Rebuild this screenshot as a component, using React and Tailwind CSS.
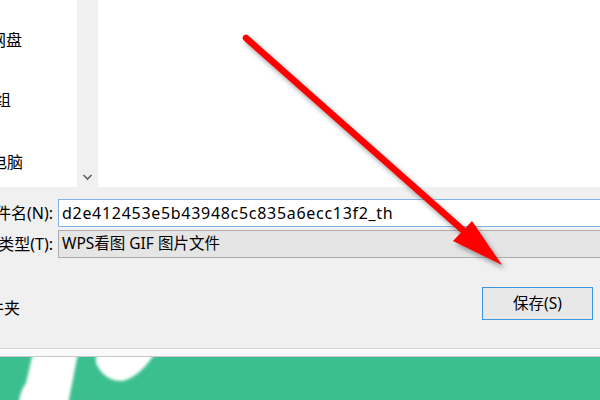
import React from "react";

const font = { fontFamily: '"Noto Sans", "Noto Sans CJK SC", sans-serif' };

function Arrow() {
  return (
    <svg className="absolute left-0 top-0" width="600" height="400" viewBox="0 0 600 400">
      <defs>
        <filter id="sh" x="-20%" y="-20%" width="140%" height="140%">
          <feGaussianBlur stdDeviation="2.5" />
        </filter>
      </defs>
      <g transform="translate(3 4)" filter="url(#sh)" opacity="0.55">
        <line x1="246" y1="38" x2="465" y2="232" stroke="#555" strokeWidth="7" strokeLinecap="round" />
        <polygon points="502,265 453,241 472,221" fill="#555" />
      </g>
      <line x1="246" y1="38" x2="465" y2="232" stroke="#ff0000" strokeWidth="6.5" strokeLinecap="round" />
      <polygon points="502,265 453,241 472,221" fill="#ff0000" />
    </svg>
  );
}

function GreenArt() {
  return (
    <svg className="absolute left-0 top-0" width="600" height="55" viewBox="0 0 600 55">
      <defs>
        <filter id="bl" x="-20%" y="-20%" width="140%" height="140%">
          <feGaussianBlur stdDeviation="1.6" />
        </filter>
      </defs>
      <g fill="#fff" filter="url(#bl)">
        <path d="M33 -4 L78 -4 L66 58 L20 58 Q16 40 26 26 Z" />
        <path d="M96 -4 L155 -4 Q140 20 122 24 Q104 24 96 6 Z" />
      </g>
    </svg>
  );
}

export default function App() {
  return (
    <div className="relative w-[600px] h-[400px] overflow-hidden bg-[#f0f0f0] text-[#000]" style={font}>
      <div className="flex h-[187px]">
        <div className="w-[77px] bg-white overflow-hidden text-[16px] leading-none">
          <div className="ml-[-10px] mt-[32px] whitespace-nowrap">网盘</div>
          <div className="ml-[-21px] mt-[44px] whitespace-nowrap">群组</div>
          <div className="ml-[-25px] mt-[46px] whitespace-nowrap">此电脑</div>
        </div>
        <div className="w-[21px] bg-[#f0f0f0] flex flex-col justify-end items-center pb-[6px]">
          <svg width="11" height="8" viewBox="0 0 11 8">
            <path d="M1.5 2 L5.5 6 L9.5 2" fill="none" stroke="#606060" strokeWidth="1.6" />
          </svg>
        </div>
        <div className="flex-1 bg-white" />
      </div>

      <div className="h-[149px] relative">
        <div className="flex items-center mt-[12px] h-[28px]">
          <div className="w-[58px] overflow-hidden flex justify-end pr-[5px] text-[16px] whitespace-nowrap">文件名(N):</div>
          <div className="flex-1 h-[28px] bg-white border border-[#7eb4ea] border-r-0 flex items-center pl-[3px] text-[16px] tracking-[0.7px]">
            d2e412453e5b43948c5c835a6ecc13f2_th
          </div>
        </div>
        <div className="flex items-center mt-[3px] h-[28px]">
          <div className="w-[58px] overflow-hidden flex justify-end pr-[5px] text-[16px] whitespace-nowrap">保存类型(T):</div>
          <div className="flex-1 h-[28px] bg-[#e5e5e5] border border-[#acacac] border-r-0 flex items-center pl-[3px] text-[15.5px]">
            WPS看图 GIF 图片文件
          </div>
        </div>
        <div className="flex items-start mt-[29px]">
          <div className="w-[60px] overflow-hidden flex justify-start mt-[9px] text-[16px] whitespace-nowrap">
            <span className="ml-[-28px]">文件夹</span>
          </div>
          <div className="flex-1" />
          <div className="w-[111px] h-[33px] mr-[7px] border border-[#3c96e0] bg-[#e8e8e8] flex items-center justify-center text-[15.5px]">
            保存(S)
          </div>
        </div>
      </div>

      <div className="h-[1px] bg-[#d5d5d5]" />
      <div className="h-[8px] bg-[#fafafa] border-b border-[#c8c8c8]" />
      <div className="relative h-[55px] bg-[#3cbf8f]">
        <GreenArt />
      </div>

      <Arrow />
    </div>
  );
}
